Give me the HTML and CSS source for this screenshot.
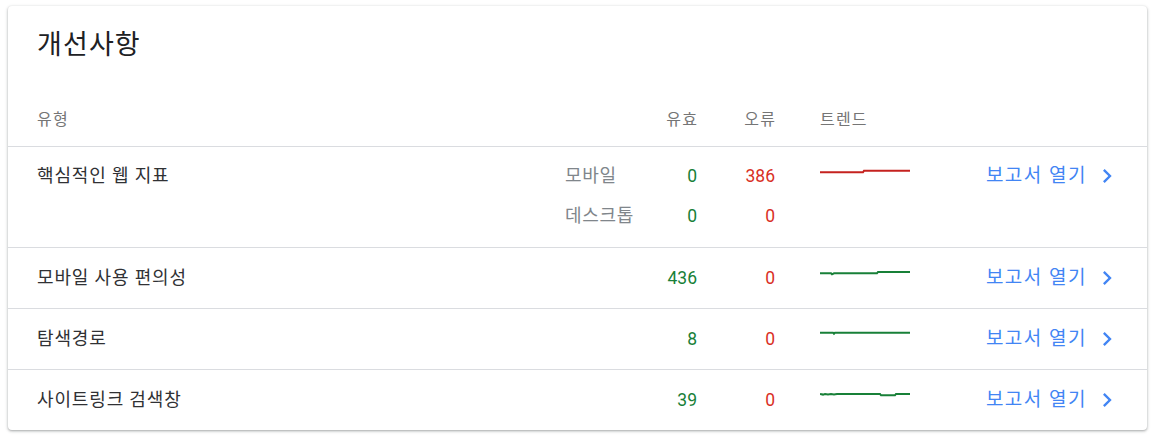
FILE: index.html
```html
<!DOCTYPE html>
<html lang="ko">
<head>
<meta charset="utf-8">
<title>개선사항</title>
<link rel="stylesheet" href="styles.css">
</head>
<body>
<section class="card">
  <h1 class="title">개선사항</h1>
  <div class="grid head">
    <div class="c-name">유형</div>
    <div class="c-valid">유효</div>
    <div class="c-error">오류</div>
    <div class="c-trend">트렌드</div>
  </div>

  <div class="grid row row-double">
    <div class="c-name name">핵심적인 웹 지표</div>
    <div class="c-dev dev">모바일</div>
    <div class="c-valid num ok">0</div>
    <div class="c-error num bad">386</div>
    <svg class="c-trend spark" viewBox="0 0 90 24" width="90" height="24"><polyline points="0,8.3 43,8.3 44,6.7 90,6.7" fill="none" stroke="#c5221f" stroke-width="2"/></svg>
    <a class="c-link link" href="#"><span class="link-text">보고서 열기</span><svg class="chev" viewBox="0 0 24 24" width="28" height="28"><path d="M10 6L8.59 7.41 13.17 12l-4.58 4.59L10 18l6-6z" fill="#4285f4"/></svg></a>
    <div class="c-dev dev r2">데스크톱</div>
    <div class="c-valid num ok r2">0</div>
    <div class="c-error num bad r2">0</div>
  </div>

  <div class="grid row">
    <div class="c-name name">모바일 사용 편의성</div>
    <div class="c-valid num ok">436</div>
    <div class="c-error num bad">0</div>
    <svg class="c-trend spark" viewBox="0 0 90 24" width="90" height="24"><polyline points="0,7.3 11,7.3 12,8.3 14,7.3 57,7.3 58,6 90,6" fill="none" stroke="#188038" stroke-width="2"/></svg>
    <a class="c-link link" href="#"><span class="link-text">보고서 열기</span><svg class="chev" viewBox="0 0 24 24" width="28" height="28"><path d="M10 6L8.59 7.41 13.17 12l-4.58 4.59L10 18l6-6z" fill="#4285f4"/></svg></a>
  </div>

  <div class="grid row">
    <div class="c-name name">탐색경로</div>
    <div class="c-valid num ok">8</div>
    <div class="c-error num bad">0</div>
    <svg class="c-trend spark" viewBox="0 0 90 24" width="90" height="24"><polyline points="0,5.7 13,5.7 14,6.8 15,5.7 90,5.7" fill="none" stroke="#188038" stroke-width="2"/></svg>
    <a class="c-link link" href="#"><span class="link-text">보고서 열기</span><svg class="chev" viewBox="0 0 24 24" width="28" height="28"><path d="M10 6L8.59 7.41 13.17 12l-4.58 4.59L10 18l6-6z" fill="#4285f4"/></svg></a>
  </div>

  <div class="grid row last">
    <div class="c-name name">사이트링크 검색창</div>
    <div class="c-valid num ok">39</div>
    <div class="c-error num bad">0</div>
    <svg class="c-trend spark" viewBox="0 0 90 24" width="90" height="24"><polyline points="0,6 3,6.6 5,6 8,6.6 11,6 14,6.6 17,6 60,6 61,7.3 75,7.3 76,6 90,6" fill="none" stroke="#188038" stroke-width="2"/></svg>
    <a class="c-link link" href="#"><span class="link-text">보고서 열기</span><svg class="chev" viewBox="0 0 24 24" width="28" height="28"><path d="M10 6L8.59 7.41 13.17 12l-4.58 4.59L10 18l6-6z" fill="#4285f4"/></svg></a>
  </div>
</section>
</body>
</html>
```

FILE: styles.css
```css
html, body {
  margin: 0;
  padding: 0;
  background: #ffffff;
}

body {
  padding: 6px 12px 8px 8px;
  font-family: Roboto, "Noto Sans CJK KR", sans-serif;
  color: #303134;
}

.card {
  background: #fff;
  border-radius: 4px;
  box-shadow: 0 1px 2px 0 rgba(60, 64, 67, 0.3), 0 1px 3px 1px rgba(60, 64, 67, 0.15);
  padding: 23px 27px 0 29px;
  height: 424px;
  box-sizing: border-box;
}

.title {
  margin: 0;
  font-size: 27px;
  line-height: 32px;
  font-weight: 400;
  color: #202124;
  letter-spacing: 1.1px;
}

.grid {
  display: grid;
  grid-template-columns: 1fr 80px 52px 78px 45px 90px 210px;
  align-items: start;
}

.head {
  margin: 47px -27px 0 -29px;
  padding: 0 27px 14px 29px;
  font-size: 16px;
  line-height: 24px;
  color: #757575;
  letter-spacing: 1.2px;
  border-bottom: 1px solid #dadce0;
}

.head .c-valid,
.head .c-error {
  margin-right: -1.2px;
}

.row {
  font-size: 18px;
  line-height: 24px;
  padding: 18px 27px 18px 29px;
  margin: 0 -27px 0 -29px;
  border-bottom: 1px solid #dadce0;
}

.row.last {
  border-bottom: none;
}

.row-double {
  padding-top: 17px;
  padding-bottom: 19px;
  row-gap: 16px;
}

.c-name { grid-column: 1; }
.c-dev { grid-column: 2; }
.c-valid { grid-column: 3; text-align: right; }
.c-error { grid-column: 4; text-align: right; }
.c-trend { grid-column: 6; }
.c-link { grid-column: 7; }

.r2 { grid-row: 2; }

.name {
  color: #303134;
  letter-spacing: 0.85px;
}

.dev {
  color: #80868b;
  letter-spacing: 0.65px;
}

.num {
  font-size: 17.5px;
}

.ok { color: #188038; }
.bad { color: #d93025; }

.spark {
  display: block;
}

.link {
  display: flex;
  align-items: center;
  justify-content: flex-end;
  height: 24px;
  color: #4285f4;
  text-decoration: none;
  gap: 6px;
  font-size: 19px;
}

.link-text {
  letter-spacing: 1.5px;
}

.chev {
  display: block;
  flex: none;
  margin-right: -1px;
}
```
